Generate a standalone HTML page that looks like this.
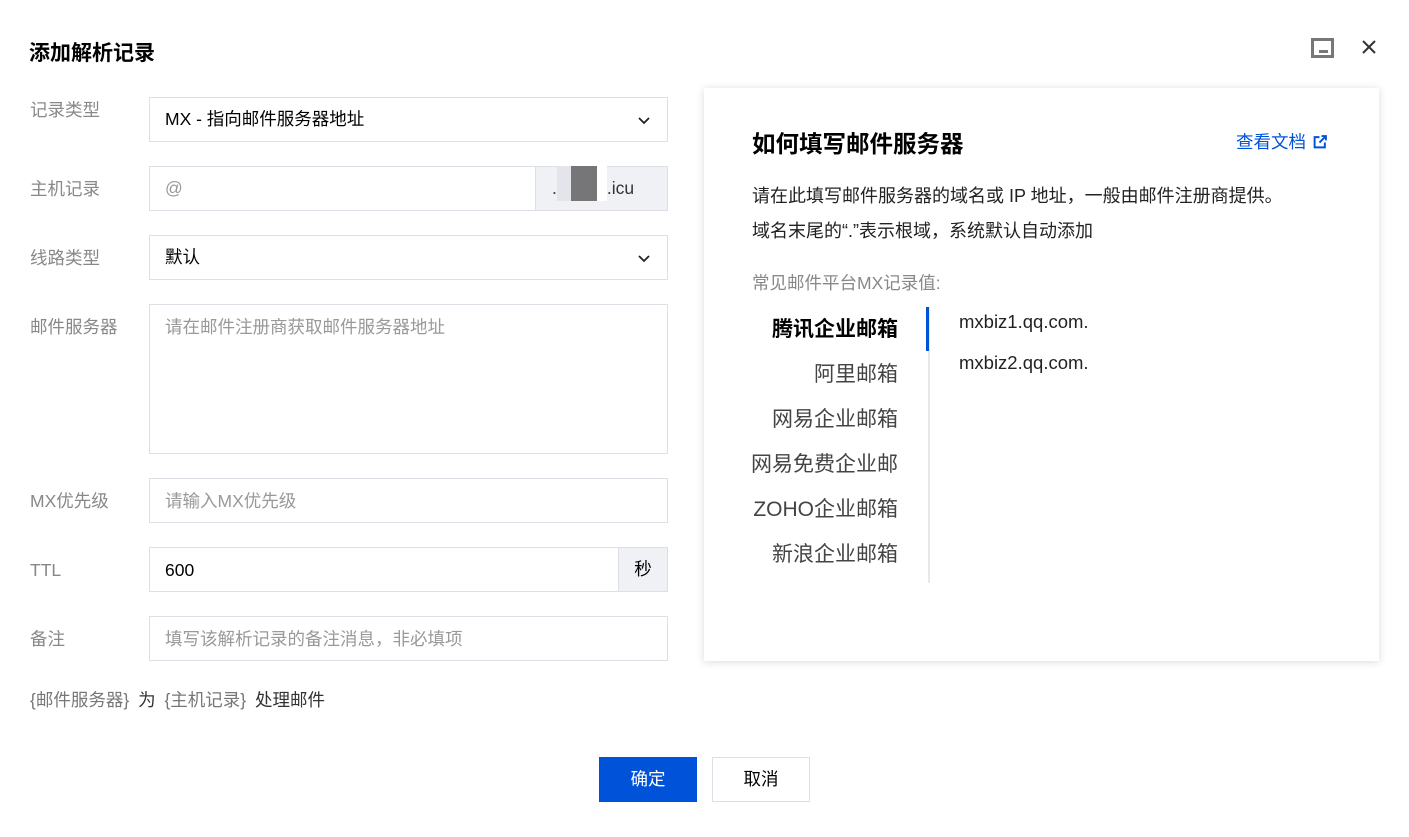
<!DOCTYPE html>
<html><head><meta charset="utf-8"><style>
*{box-sizing:border-box;margin:0;padding:0}
body{width:1409px;height:837px;background:#fff;font-family:"Liberation Sans","Noto Sans CJK SC",sans-serif;position:relative;overflow:hidden;color:#000}
.a{position:absolute}
.lbl{position:absolute;left:30px;font-size:17.5px;color:#888;line-height:22px}
.inp{position:absolute;left:149px;width:519px;border:1px solid #dcdfe6;background:#fff;font-size:17.5px;line-height:22px;padding:0 15px}
.ph{color:#999}
.t{display:block;text-align:right;position:absolute;right:0;width:200px;font-size:21px;color:#444;line-height:26px}
</style></head><body>
<div class="a" style="left:29px;top:37px;font-size:21px;font-weight:bold;color:#000">添加解析记录</div>
<div class="a" style="left:1311px;top:38px;width:23px;height:20px;border:3px solid #777"><div class="a" style="left:5px;top:9px;width:9px;height:3px;background:#777"></div></div>
<svg class="a" style="left:1361px;top:39px" width="16" height="16" viewBox="0 0 16 16"><path d="M2 2L14 14M14 2L2 14" stroke="#333" stroke-width="2"/></svg>

<div class="lbl" style="top:99px">记录类型</div>
<div class="inp" style="top:97px;height:45px;padding-top:10px">MX - 指向邮件服务器地址
<svg class="a" style="right:16px;top:15px" width="14" height="14" viewBox="0 0 14 14"><path d="M2 5l5 5 5-5" fill="none" stroke="#222" stroke-width="1.8"/></svg></div>

<div class="lbl" style="top:178px">主机记录</div>
<div class="inp" style="top:166px;height:45px;padding-top:10px"><span class="ph">@</span>
<div class="a" style="left:385px;top:-1px;width:133px;height:45px;background:#f0f1f5;border:1px solid #dcdfe6;font-size:17.5px;padding:10px 0 0 16px;color:#333">.<span style="display:inline-block;width:14px;height:35px;background:#e4e5ea;vertical-align:middle;margin:-12px 0 0 0"></span><span style="display:inline-block;width:26px;height:35px;background:#767679;vertical-align:middle;margin-top:-12px"></span><span style="display:inline-block;width:10px;height:35px;background:#fff;vertical-align:middle;margin-top:-12px"></span>.icu</div></div>

<div class="lbl" style="top:247px">线路类型</div>
<div class="inp" style="top:235px;height:45px;padding-top:10px">默认
<svg class="a" style="right:16px;top:15px" width="14" height="14" viewBox="0 0 14 14"><path d="M2 5l5 5 5-5" fill="none" stroke="#222" stroke-width="1.8"/></svg></div>

<div class="lbl" style="top:316px">邮件服务器</div>
<div class="inp ph" style="top:304px;height:150px;padding-top:11px">请在邮件注册商获取邮件服务器地址</div>

<div class="lbl" style="top:490px">MX优先级</div>
<div class="inp ph" style="top:478px;height:45px;padding-top:11px">请输入MX优先级</div>

<div class="lbl" style="top:559px">TTL</div>
<div class="inp" style="top:547px;height:45px;padding-top:11px">600
<div class="a" style="right:-1px;top:-1px;width:50px;height:45px;background:#f0f1f5;border:1px solid #dcdfe6;text-align:center;padding-top:10px;font-size:17.5px">秒</div></div>

<div class="lbl" style="top:628px">备注</div>
<div class="inp ph" style="top:616px;height:45px;padding-top:11px">填写该解析记录的备注消息，非必填项</div>

<div class="a" style="left:30px;top:687px;font-size:17.5px;color:#333;word-spacing:4px"><span style="color:#777">{邮件服务器}</span> 为 <span style="color:#777">{主机记录}</span> 处理邮件</div>

<div class="a" style="left:599px;top:757px;width:98px;height:45px;background:#0052d9;color:#fff;font-size:17.5px;text-align:center;line-height:45px">确定</div>
<div class="a" style="left:712px;top:757px;width:98px;height:45px;border:1px solid #dcdfe6;color:#000;font-size:17.5px;text-align:center;line-height:43px">取消</div>

<div class="a" style="left:704px;top:88px;width:675px;height:573px;background:#fff;box-shadow:0 1px 8px rgba(0,0,0,.15)">
<div class="a" style="left:48px;top:37px;font-size:23.5px;font-weight:bold">如何填写邮件服务器</div>
<div class="a" style="left:532px;top:41px;font-size:17.5px;color:#0052d9">查看文档
<svg style="vertical-align:-1px;margin-left:2px" width="14" height="14" viewBox="0 0 13 13"><path d="M6 2H1.5v9.5H11V7M8 1h4v4M12 1L6 7" fill="none" stroke="#0052d9" stroke-width="1.8"/></svg></div>
<div class="a" style="left:48px;top:91px;font-size:18px;color:#222;line-height:35px">请在此填写邮件服务器的域名或 IP 地址，一般由邮件注册商提供。<br>域名末尾的“.”表示根域，系统默认自动添加</div>
<div class="a" style="left:48px;top:182px;font-size:17.5px;color:#888">常见邮件平台MX记录值:</div>
<div class="a" style="left:224px;top:219px;width:2px;height:276px;background:#e6e8ee"></div>
<div class="a" style="left:222px;top:219px;width:3px;height:44px;background:#0052d9"></div>
<div class="a" style="left:0;top:229px;width:194px;height:300px">
<span class="t" style="top:0;color:#000;font-weight:bold">腾讯企业邮箱</span>
<span class="t" style="top:45px">阿里邮箱</span>
<span class="t" style="top:90px">网易企业邮箱</span>
<span class="t" style="top:135px">网易免费企业邮</span>
<span class="t" style="top:180px">ZOHO企业邮箱</span>
<span class="t" style="top:225px">新浪企业邮箱</span>
</div>
<div class="a" style="left:255px;top:213px;font-size:18.5px;color:#222;line-height:41px">mxbiz1.qq.com.<br>mxbiz2.qq.com.</div>
</div>
</body></html>
